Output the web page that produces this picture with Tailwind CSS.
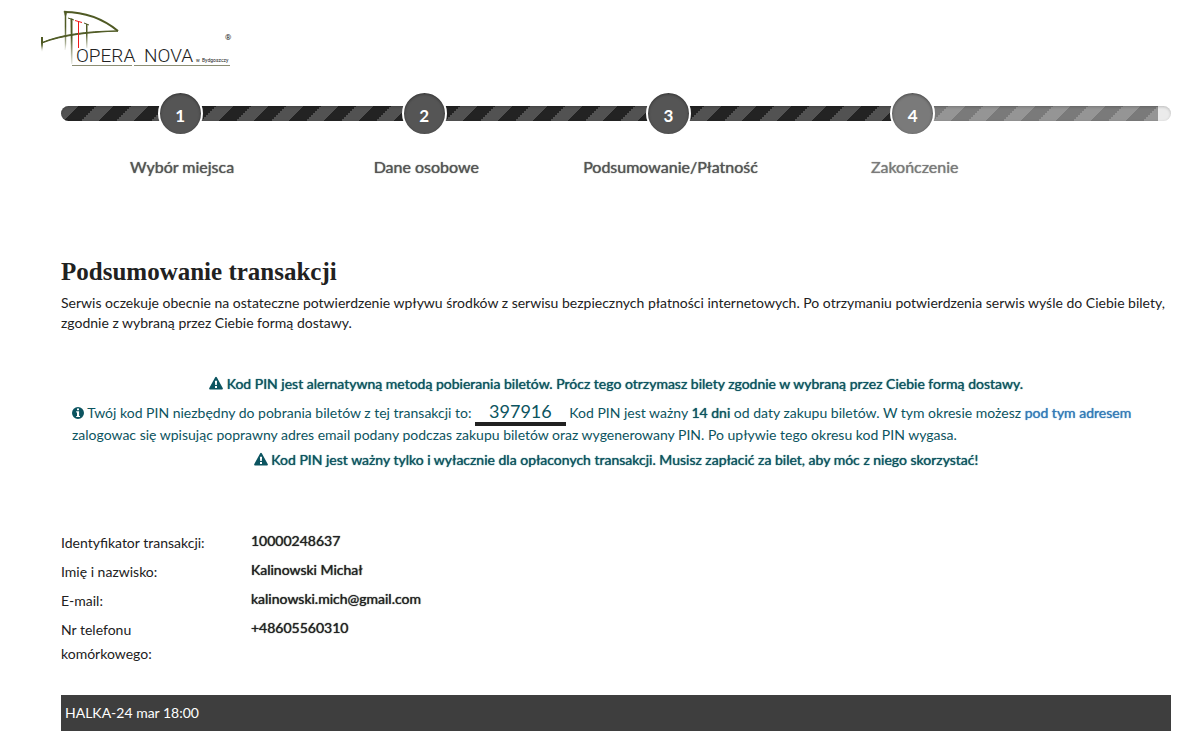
<!DOCTYPE html>
<html lang="pl">
<head>
<meta charset="utf-8">
<meta name="viewport" content="width=device-width, initial-scale=1">
<title>Opera Nova – Podsumowanie transakcji</title>
<script src="https://cdn.jsdelivr.net/npm/@tailwindcss/browser@4"></script>
</head>
<body class="bg-white pb-4 font-['Lato',sans-serif] text-sm text-[#212121]">
<header class="pl-10 pt-2">
  <svg class="block h-[62px] w-[196px]" viewBox="40 8 196 62" role="img" aria-label="Opera Nova w Bydgoszczy">
    <defs>
      <linearGradient id="mast" x1="0" y1="0" x2="0" y2="1"><stop offset="0.4" stop-color="#4f5a24"/><stop offset="1" stop-color="#4f5a24" stop-opacity="0.1"/></linearGradient>
    </defs>
    <path d="M64.500 12C83 12 102 18 118 31" fill="none" stroke="#4f5a24" stroke-width="2"/>
    <path d="M42 42.500C60 35 85 31 118 31C92 32 62 35 42 43Z" fill="#4f5a24" stroke="#4f5a24"/>
    <path d="M64 11L67 11.500L66 16V44L65 50V16Z" fill="url(#mast)" stroke="url(#mast)" stroke-width="0.500"/>
    <path d="M41 37H43V46L42 52L41 46Z" fill="url(#mast)"/>
    <path d="M70.500 18.500H72.500V64H71Z" fill="url(#mast)"/>
    <path d="M86 24H87.500V48H86Z" fill="url(#mast)"/>
    <path d="M68 18L74 20M84 23L89 25" stroke="#4f5a24"/>
    <path d="M75 20.500L82 22.500M78.500 21V48" stroke="#f01818" fill="none"/>
    <path d="M72 65.500H132M134 65.500H230" stroke="#8b8d74"/>
    <g font-family="Roboto, sans-serif" fill="#222">
      <text x="76" y="62" font-size="19" font-weight="300">OPERA</text>
      <text x="144" y="62" font-size="19" font-weight="300">NOVA</text>
      <text x="196" y="62" font-size="5">w</text>
      <text x="202" y="62" font-size="5">Bydgoszczy</text>
      <text x="225" y="40" font-size="8">®</text>
    </g>
  </svg>
</header>

<main class="pl-[61px] pr-[30px]">
  <nav aria-label="Etapy zakupu" class="relative pt-[21px]">
    <div class="absolute inset-x-0 top-9 flex h-[15px] overflow-hidden rounded-full bg-[#ebebeb]">
      <div class="w-[10.8%] bg-[linear-gradient(-45deg,#232323_25%,#525252_25%_50%,#232323_50%_75%,#525252_75%)] bg-size-[35px_35px]"></div>
      <div class="w-[22%] bg-[linear-gradient(-45deg,#232323_25%,#525252_25%_50%,#232323_50%_75%,#525252_75%)] bg-size-[35px_35px]"></div>
      <div class="w-[22%] bg-[linear-gradient(-45deg,#232323_25%,#525252_25%_50%,#232323_50%_75%,#525252_75%)] bg-size-[35px_35px]"></div>
      <div class="w-[22%] bg-[linear-gradient(-45deg,#232323_25%,#525252_25%_50%,#232323_50%_75%,#525252_75%)] bg-size-[35px_35px]"></div>
      <div class="w-[22%] bg-[linear-gradient(-45deg,#7a7a7a_25%,#959595_25%_50%,#7a7a7a_50%_75%,#959595_75%)] bg-size-[35px_35px]"></div>
    </div>
    <div class="pointer-events-none absolute inset-x-0 top-9 h-[15px] rounded-full shadow-[inset_0_1px_3px_rgba(0,0,0,0.2)]"></div>
    <ol class="relative grid grid-cols-[22fr_22fr_22fr_22fr_12fr] text-center text-base text-[#555]">
      <li><span class="mx-auto flex size-[45px] -translate-x-[3px] items-center justify-center rounded-full border-2 border-white bg-[#555] pt-1 text-[17px] font-bold text-white shadow-[inset_0_1px_3px_rgba(0,0,0,0.4)]">1</span><span class="-ml-0.5 mt-[19px] block leading-6 [text-shadow:0_0_1px_currentColor]">Wybór miejsca</span></li>
      <li><span class="mx-auto flex size-[45px] -translate-x-[3px] items-center justify-center rounded-full border-2 border-white bg-[#555] pt-1 text-[17px] font-bold text-white shadow-[inset_0_1px_3px_rgba(0,0,0,0.4)]">2</span><span class="-ml-0.5 mt-[19px] block leading-6 [text-shadow:0_0_1px_currentColor]">Dane osobowe</span></li>
      <li><span class="mx-auto flex size-[45px] -translate-x-[3px] items-center justify-center rounded-full border-2 border-white bg-[#555] pt-1 text-[17px] font-bold text-white shadow-[inset_0_1px_3px_rgba(0,0,0,0.4)]">3</span><span class="-ml-0.5 mt-[19px] block leading-6 [text-shadow:0_0_1px_currentColor]">Podsumowanie/Płatność</span></li>
      <li class="text-[#7a7a7a]"><span class="mx-auto flex size-[45px] -translate-x-[3px] items-center justify-center rounded-full border-2 border-white bg-[#7a7a7a] pt-1 text-[17px] font-bold text-white shadow-[inset_0_1px_3px_rgba(0,0,0,0.4)]">4</span><span class="-ml-0.5 mt-[19px] block leading-6 [text-shadow:0_0_1px_currentColor]">Zakończenie</span></li>
    </ol>
  </nav>

  <h1 class="mt-[77px] font-['Liberation_Serif',serif] text-[25px] font-bold leading-8">Podsumowanie transakcji</h1>
  <p class="mt-[5px] leading-5">Serwis oczekuje obecnie na ostateczne potwierdzenie wpływu środków z serwisu bezpiecznych płatności internetowych. Po otrzymaniu potwierdzenia serwis wyśle do Ciebie bilety, zgodnie z wybraną przez Ciebie formą dostawy.</p>

  <section class="mt-10 px-[11px] text-[#0c5460]">
    <p class="text-center leading-[22px] [text-shadow:0_0_1px_currentColor]"><svg class="inline-block h-3.5 w-3.5 align-[-1px]" viewBox="0 0 14 14" fill="currentColor" fill-rule="evenodd" aria-hidden="true"><path d="M6.200 1.300Q7 0 7.800 1.300L13.700 12Q14.300 13.400 13 13.500H1Q-.3 13.400.3 12ZM5.900 4.700 6.200 8.900H7.800L8.100 4.700ZM6 10V11.900H8V10Z"/></svg> Kod PIN jest alernatywną metodą pobierania biletów. Prócz tego otrzymasz bilety zgodnie w wybraną przez Ciebie formą dostawy.</p>
    <p class="mt-[7px] leading-[22px]"><svg class="inline-block size-3 align-[-1px]" viewBox="0 0 12 12" fill="currentColor" fill-rule="evenodd" aria-hidden="true"><path d="M6 0A6 6 0 1 1 6 12A6 6 0 1 1 6 0ZM5 1.600V3.300H7V1.600ZM4.200 4.300V5.400H5V8.900H4.200V10H8V8.900H7.100V4.300Z"/></svg> Twój kod PIN niezbędny do pobrania biletów z tej transakcji to: <span class="border-b-4 border-[#212121] px-3.5 text-lg leading-none">397916</span> Kod PIN jest ważny <b class="font-normal [text-shadow:0_0_1px_currentColor]">14 dni</b> od daty zakupu biletów. W tym okresie możesz <a href="#" class="text-[#337ab7] [text-shadow:0_0_1px_currentColor]">pod tym adresem</a> zalogowac się wpisując poprawny adres email podany podczas zakupu biletów oraz wygenerowany PIN. Po upływie tego okresu kod PIN wygasa.</p>
    <p class="mt-[3px] text-center leading-[22px] [text-shadow:0_0_1px_currentColor]"><svg class="inline-block h-3.5 w-3.5 align-[-1px]" viewBox="0 0 14 14" fill="currentColor" fill-rule="evenodd" aria-hidden="true"><path d="M6.200 1.300Q7 0 7.800 1.300L13.700 12Q14.300 13.400 13 13.500H1Q-.3 13.400.3 12ZM5.900 4.700 6.200 8.900H7.800L8.100 4.700ZM6 10V11.900H8V10Z"/></svg> Kod PIN jest ważny tylko i wyłacznie dla opłaconych transakcji. Musisz zapłacić za bilet, aby móc z niego skorzystać!</p>
  </section>

  <dl class="mt-[60px] grid grid-cols-[150px_1fr] gap-x-10 gap-y-[5px] [&>dd]:leading-5 [&>dd]:[text-shadow:0_0_1px_currentColor] [&>dt]:leading-6">
    <dt>Identyfikator transakcji:</dt><dd>10000248637</dd>
    <dt>Imię i nazwisko:</dt><dd>Kalinowski Michał</dd>
    <dt>E-mail:</dt><dd>kalinowski.mich@gmail.com</dd>
    <dt>Nr telefonu komórkowego:</dt><dd>+48605560310</dd>
  </dl>

  <h2 class="mt-[29px] bg-[#3e3e3e] px-1 py-2 leading-5 text-white">HALKA-24 mar 18:00</h2>
</main>
</body>
</html>
